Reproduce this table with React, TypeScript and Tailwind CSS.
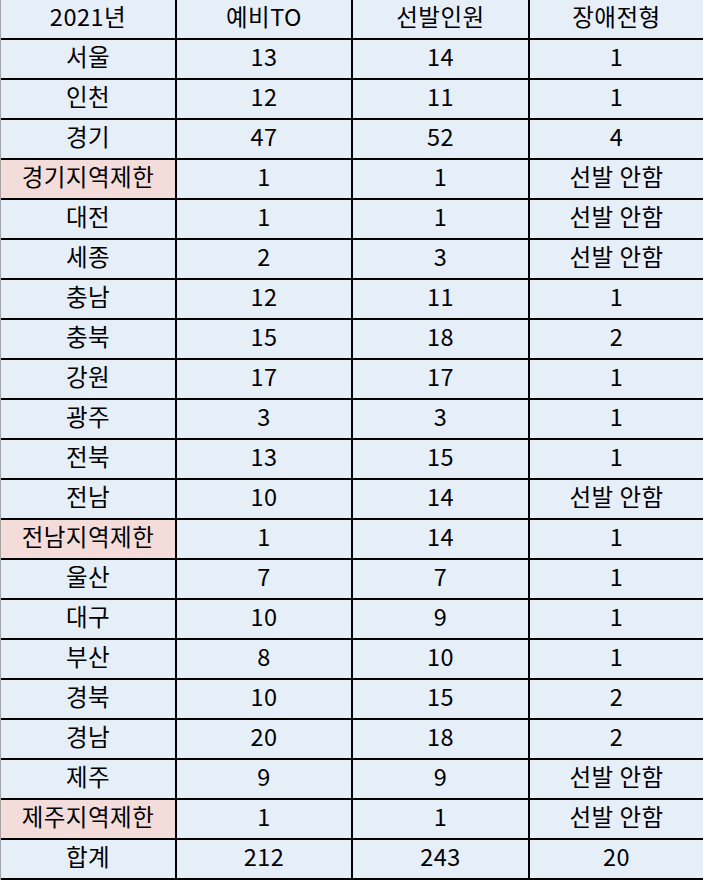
import React from 'react'

type Row = {
  region: string
  to: string
  selected: string
  disabled: string
  limited?: boolean
}

const rows: Row[] = [
  { region: '서울', to: '13', selected: '14', disabled: '1' },
  { region: '인천', to: '12', selected: '11', disabled: '1' },
  { region: '경기', to: '47', selected: '52', disabled: '4' },
  { region: '경기지역제한', to: '1', selected: '1', disabled: '선발 안함', limited: true },
  { region: '대전', to: '1', selected: '1', disabled: '선발 안함' },
  { region: '세종', to: '2', selected: '3', disabled: '선발 안함' },
  { region: '충남', to: '12', selected: '11', disabled: '1' },
  { region: '충북', to: '15', selected: '18', disabled: '2' },
  { region: '강원', to: '17', selected: '17', disabled: '1' },
  { region: '광주', to: '3', selected: '3', disabled: '1' },
  { region: '전북', to: '13', selected: '15', disabled: '1' },
  { region: '전남', to: '10', selected: '14', disabled: '선발 안함' },
  { region: '전남지역제한', to: '1', selected: '14', disabled: '1', limited: true },
  { region: '울산', to: '7', selected: '7', disabled: '1' },
  { region: '대구', to: '10', selected: '9', disabled: '1' },
  { region: '부산', to: '8', selected: '10', disabled: '1' },
  { region: '경북', to: '10', selected: '15', disabled: '2' },
  { region: '경남', to: '20', selected: '18', disabled: '2' },
  { region: '제주', to: '9', selected: '9', disabled: '선발 안함' },
  { region: '제주지역제한', to: '1', selected: '1', disabled: '선발 안함', limited: true },
  { region: '합계', to: '212', selected: '243', disabled: '20' },
]

function TableRow({ cells, limited }: { cells: string[]; limited?: boolean }) {
  return (
    <div className="grid grid-cols-[176px_176px_177px_173px] h-[40px] border-b-2 border-black">
      {cells.map((c, i) => (
        <div
          key={i}
          className={`flex items-center justify-center pb-[5px] ${i < 3 ? 'border-r-2 border-black' : ''} ${
            i === 0 && limited ? 'bg-[#f3dcda]' : ''
          }`}
        >
          {c}
        </div>
      ))}
    </div>
  )
}

export default function App() {
  return (
    <div
      className="w-[703px] h-[880px] overflow-hidden bg-[#e6eef8] border-l border-[#a3a3a3] text-[23.5px] leading-none text-black tracking-[0.5px]"
      style={{ fontFamily: '"Noto Sans CJK KR", "Noto Sans", sans-serif' }}
    >
      <TableRow cells={['2021년', '예비TO', '선발인원', '장애전형']} />
      {rows.map((r) => (
        <TableRow key={r.region} cells={[r.region, r.to, r.selected, r.disabled]} limited={r.limited} />
      ))}
    </div>
  )
}
